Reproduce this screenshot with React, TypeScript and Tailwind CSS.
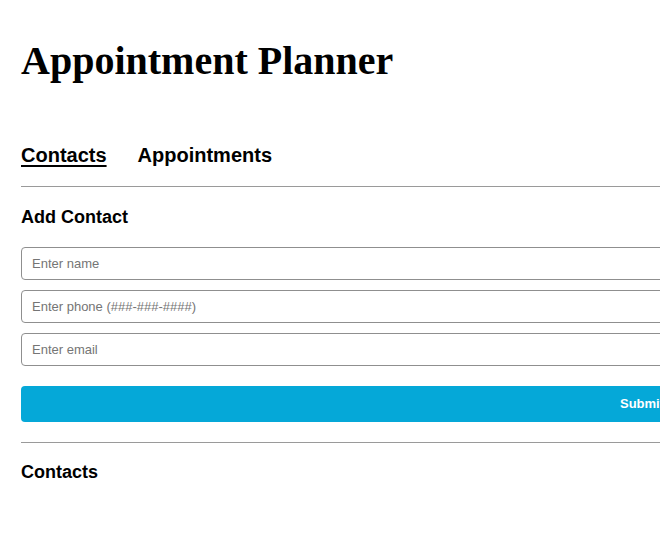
export default function App() {
  const inputClass =
    "w-full h-[33px] border border-[#8f8f8f] rounded-[4px] px-[10px] text-[13px] text-black placeholder:text-[#757575] outline-none font-['Liberation_Sans',Arial,sans-serif]";

  return (
    <div className="w-full overflow-hidden bg-white min-h-[560px]">
      <div className="w-[1284px] px-[21px] font-['Liberation_Sans',Arial,sans-serif] text-black">
        <h1 className="pt-[38px] text-[40px] leading-[46px] font-bold font-['Liberation_Serif','Times_New_Roman',serif]">
          Appointment Planner
        </h1>

        <nav className="mt-[59px] flex gap-[31px] text-[20px] leading-[24px] font-bold">
          <a className="underline underline-offset-[3px] decoration-2">Contacts</a>
          <a>Appointments</a>
        </nav>

        <hr className="mt-[19px] border-t border-[#9a9a9a]" />

        <section>
          <h2 className="mt-[20px] text-[18px] leading-[20px] font-bold">Add Contact</h2>
          <form className="mt-[20px] flex flex-col gap-[10px]">
            <input className={inputClass} placeholder="Enter name" />
            <input className={inputClass} placeholder="Enter phone (###-###-####)" />
            <input className={inputClass} placeholder="Enter email" />
            <button
              type="button"
              className="mt-[10px] h-[36px] w-full rounded-[4px] bg-[#05a8d8] text-white text-[13px] font-bold"
            >
              Submit
            </button>
          </form>
        </section>

        <hr className="mt-[20px] border-t border-[#9a9a9a]" />

        <section>
          <h2 className="mt-[19px] text-[18px] leading-[20px] font-bold">Contacts</h2>
        </section>
      </div>
    </div>
  );
}
